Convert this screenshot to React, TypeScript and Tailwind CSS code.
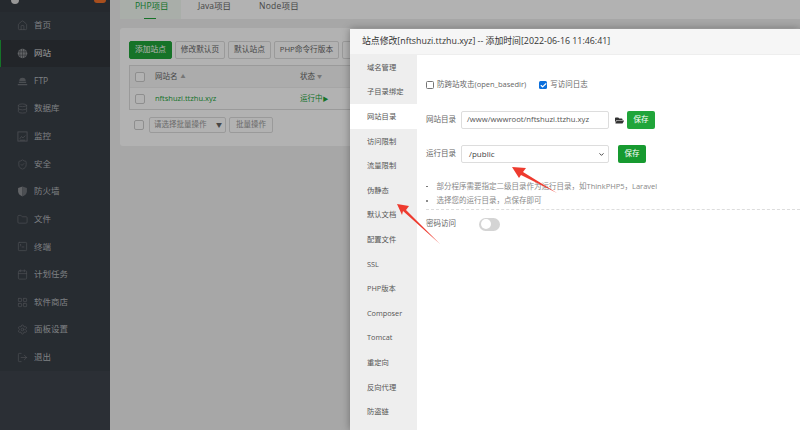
import { Home, Database, ShieldCheck, Folder, SquareTerminal, Calendar, LayoutGrid, Settings, LogOut, Check, ChevronDown } from 'lucide-react';
import { FaFolderOpen } from 'react-icons/fa';
import type { ReactNode } from 'react';

const font = { fontFamily: '"Open Sans","Noto Sans CJK SC",sans-serif' };

const GlobeIcon = () => (
  <svg viewBox="0 0 12 12" className="w-[11px] h-[11px]">
    <circle cx="6" cy="6" r="5.2" fill="#8d9094" />
    <path d="M1 4.2h10M1 7.8h10M6 1v10M3.8 1.5c-1 3-1 6 0 9M8.2 1.5c1 3 1 6 0 9" stroke="#3a3e43" strokeWidth="0.6" fill="none" />
  </svg>
);

const FtpIcon = () => (
  <svg viewBox="0 0 12 12" className="w-[11px] h-[11px]" fill="#6d7278">
    <path d="M2.5 5.5a3.5 3.5 0 0 1 7 0z" />
    <rect x="2" y="6.2" width="8" height="1.4" />
    <rect x="0.8" y="8.6" width="10.4" height="1.6" rx="0.5" />
  </svg>
);

const MonitorIcon = () => (
  <svg viewBox="0 0 12 12" className="w-[11px] h-[11px]" fill="none" stroke="#6d7278" strokeWidth="0.9">
    <rect x="1" y="1" width="10" height="10" />
    <path d="M3 8.5 5 6l1.5 1.5L9 5M3 10h6" />
  </svg>
);

const ShieldHalfIcon = () => (
  <svg viewBox="0 0 12 12" className="w-[11px] h-[11px]">
    <path d="M6 .6 1.2 2.2v3.6c0 2.8 2 4.6 4.8 5.6z" fill="#8d9094" />
    <path d="M6 .6l4.8 1.6v3.6c0 2.8-2 4.6-4.8 5.6z" fill="#6d7278" />
  </svg>
);

const lucideIcon = 'w-[11px] h-[11px] text-[#6d7278]';

const menu: { label: string; icon: ReactNode; active?: boolean }[] = [
  { label: '首页', icon: <Home className={lucideIcon} strokeWidth={1.5} /> },
  { label: '网站', icon: <GlobeIcon />, active: true },
  { label: 'FTP', icon: <FtpIcon /> },
  { label: '数据库', icon: <Database className={lucideIcon} strokeWidth={1.5} /> },
  { label: '监控', icon: <MonitorIcon /> },
  { label: '安全', icon: <ShieldCheck className={lucideIcon} strokeWidth={1.5} /> },
  { label: '防火墙', icon: <ShieldHalfIcon /> },
  { label: '文件', icon: <Folder className={lucideIcon} strokeWidth={1.5} /> },
  { label: '终端', icon: <SquareTerminal className={lucideIcon} strokeWidth={1.5} /> },
  { label: '计划任务', icon: <Calendar className={lucideIcon} strokeWidth={1.5} /> },
  { label: '软件商店', icon: <LayoutGrid className={lucideIcon} strokeWidth={1.5} /> },
  { label: '面板设置', icon: <Settings className={lucideIcon} strokeWidth={1.5} /> },
  { label: '退出', icon: <LogOut className={lucideIcon} strokeWidth={1.5} /> },
];

const modalNav = ['域名管理', '子目录绑定', '网站目录', '访问限制', '流量限制', '伪静态', '默认文档', '配置文件', 'SSL', 'PHP版本', 'Composer', 'Tomcat', '重定向', '反向代理', '防盗链'];

const Sidebar = () => (
  <div className="w-[110px] shrink-0 h-[430px] bg-[#3e444d] flex flex-col">
    <div className="h-[12px] bg-[#363b42] flex items-start justify-between pl-[11px] pr-[4px]">
      <div className="w-[8px] h-[4px] bg-[#d8d8d8] rounded-b-full" />
      <div className="w-[12px] h-[3px] bg-[#f0702a] rounded-b-[3px]" />
    </div>
    <div className="bg-[#393f47]">
      {menu.map((m) => (
        <div
          key={m.label}
          className={`h-[27.65px] flex items-center pl-[16px] gap-[6px] text-[8.5px] border-l-[1px] ${
            m.active ? 'bg-[#31363c] border-[#1fa53a] text-[#e0e0e0]' : 'border-transparent text-[#b4b8bc]'
          }`}
        >
          <span className="w-[11px] flex justify-center">{m.icon}</span>
          <span>{m.label}</span>
        </div>
      ))}
    </div>
  </div>
);

const Btn = ({ children, green, width }: { children?: ReactNode; green?: boolean; width: string }) => (
  <div
    className={`h-[18px] ${width} shrink-0 flex items-center justify-center rounded-[2px] text-[7.7px] border ${
      green ? 'bg-[#20a53a] border-[#20a53a] text-white' : 'bg-white border-[#ddd] text-[#666]'
    }`}
  >
    {children}
  </div>
);

const Box = () => <div className="w-[10px] h-[10px] bg-white border border-[#ccc] rounded-[2px]" />;

const Main = () => (
  <div className="flex-1 min-w-0 pl-[10px] bg-[#f0f0f0]">
    <div className="h-[19px] bg-white flex text-[8.5px] text-[#666] rounded-bl-[3px]">
      <div className="w-[61px] h-[19px] bg-[#f2faf3] relative text-[#20a53a] pl-[15px]">
        PHP项目
        <div className="absolute left-[24px] bottom-0 w-[12px] h-[1px] bg-[#20a53a]" />
      </div>
      <div className="pl-[17px]">Java项目</div>
      <div className="pl-[28px] tracking-[0.25px]">Node项目</div>
    </div>
    <div className="mt-[9px] h-[118px] bg-white rounded-[3px] px-[9px] pt-[13px]">
      <div className="flex gap-[3px] whitespace-nowrap">
        <Btn green width="w-[43px]">添加站点</Btn>
        <Btn width="w-[50px]">修改默认页</Btn>
        <Btn width="w-[43px]">默认站点</Btn>
        <Btn width="w-[65px]">PHP命令行版本</Btn>
        <Btn width="w-[40px]" />
      </div>
      <div className="mt-[6px] border border-[#ddd] text-[7.5px]">
        <div className="h-[22px] bg-[#f6f6f6] flex items-center pl-[5px] text-[#666] border-b border-[#eee]">
          <Box />
          <span className="ml-[10px] w-[145px] flex items-center">网站名 <span className="ml-[3px] text-[5px] text-[#aaa]">▲</span></span>
          <span className="flex items-center">状态 <span className="ml-[2px] text-[5px] text-[#aaa]">▼</span></span>
        </div>
        <div className="h-[21px] flex items-center pl-[5px] text-[#20a53a]">
          <Box />
          <span className="ml-[10px] w-[145px]">nftshuzi.ttzhu.xyz</span>
          <span>运行中<span className="text-[6px]">▶</span></span>
        </div>
      </div>
      <div className="mt-[7px] pl-[5px] flex items-center">
        <Box />
        <div className="ml-[5px] w-[77px] h-[16px] border border-[#ddd] rounded-[2px] pl-[4px] pr-[3px] flex items-center justify-between text-[7.5px] text-[#999]">
          请选择批量操作
          <span className="text-[6px] text-[#666]">▼</span>
        </div>
        <div className="ml-[3px] h-[16px] px-[6px] border border-[#ddd] rounded-[2px] flex items-center text-[7.5px] text-[#999]">批量操作</div>
      </div>
    </div>
  </div>
);

const Save = ({ dark }: { dark?: boolean }) => (
  <div className={`w-[28px] h-[18px] rounded-[2px] text-white text-[7.5px] flex items-center justify-center ${dark ? 'bg-[#179a30]' : 'bg-[#20a53a]'}`}>保存</div>
);

const Modal = () => (
  <div className="absolute left-[350px] top-[29px] right-0 bottom-0 bg-white shadow-[0_0_8px_rgba(0,0,0,0.35)] flex flex-col">
    <div className="h-[26px] shrink-0 bg-[#f6f6f6] border-b border-[#eee] pl-[12px] flex items-center text-[8.85px] text-[#333]">
      站点修改[nftshuzi.ttzhu.xyz] -- 添加时间[2022-06-16 11:46:41]
    </div>
    <div className="flex flex-1 min-h-0">
      <div className="w-[67px] shrink-0 bg-[#eeeeee] text-[7.3px] text-[#555]">
        {modalNav.map((n) => (
          <div key={n} className={`h-[24.6px] pl-[17px] flex items-center ${n === '网站目录' ? 'bg-white' : ''}`}>
            {n}
          </div>
        ))}
      </div>
      <div className="flex-1 min-w-0 pl-[9px] pt-[21px] text-[7.5px] text-[#666]">
        <div className="h-[18px] flex items-center">
          <span className="w-[8px] h-[8px] border border-[#767676] rounded-[1.5px] bg-white" />
          <span className="ml-[3px]">防跨站攻击(open_basedir)</span>
          <span className="ml-[13px] w-[8px] h-[8px] rounded-[1.5px] bg-[#0b6fdc] flex items-center justify-center">
            <Check className="w-[7px] h-[7px] text-white" strokeWidth={4} />
          </span>
          <span className="ml-[3px]">写访问日志</span>
        </div>
        <div className="mt-[17px] flex items-center h-[18px]">
          <span className="w-[35px]">网站目录</span>
          <div className="w-[148px] h-[18px] border border-[#ddd] rounded-[2px] pl-[5px] flex items-center text-[7.7px] text-[#555]">/www/wwwroot/nftshuzi.ttzhu.xyz</div>
          <FaFolderOpen className="ml-[6px] w-[9px] h-[9px] text-[#333]" />
          <span className="ml-[3px]"><Save /></span>
        </div>
        <div className="mt-[16px] flex items-center h-[18px]">
          <span className="w-[35px]">运行目录</span>
          <div className="w-[148px] h-[18px] border border-[#ddd] rounded-[2px] pl-[7px] pr-[3px] flex items-center justify-between text-[8px] text-[#444]">
            /public
            <ChevronDown className="w-[7px] h-[7px] text-[#333]" strokeWidth={3} />
          </div>
          <span className="ml-[9px]"><Save dark /></span>
        </div>
        <ul className="mt-[16px] text-[#888]">
          <li className="h-[14.5px] flex items-center"><span className="w-[1.5px] h-[1.5px] bg-[#666] rounded-full mr-[9px]" />部分程序需要指定二级目录作为运行目录，如ThinkPHP5，Laravel</li>
          <li className="h-[14.5px] flex items-center"><span className="w-[1.5px] h-[1.5px] bg-[#666] rounded-full mr-[9px]" />选择您的运行目录，点保存即可</li>
        </ul>
        <div className="mt-[1px] border-t border-dashed border-[#ddd]" />
        <div className="mt-[7px] flex items-center h-[14px]">
          <span className="w-[53px]">密码访问</span>
          <div className="w-[21px] h-[13px] rounded-full bg-[#d4d4d4] p-[1.5px]">
            <div className="w-[10px] h-[10px] rounded-full bg-white" />
          </div>
        </div>
      </div>
    </div>
  </div>
);

export default function App() {
  return (
    <div className="relative w-[800px] h-[430px] overflow-hidden flex" style={font}>
      <Sidebar />
      <Main />
      <div className="absolute inset-0 bg-black/30" />
      <Modal />
      <svg className="absolute inset-0 w-[800px] h-[430px] pointer-events-none" viewBox="0 0 800 430">
        <polygon points="512,167 526,168 523,172 557,193 521,175 519,178" fill="#ee3b2f" />
        <polygon points="397,204 409,206 406,210 440,244 403,211 402,215" fill="#ee3b2f" />
      </svg>
    </div>
  );
}
